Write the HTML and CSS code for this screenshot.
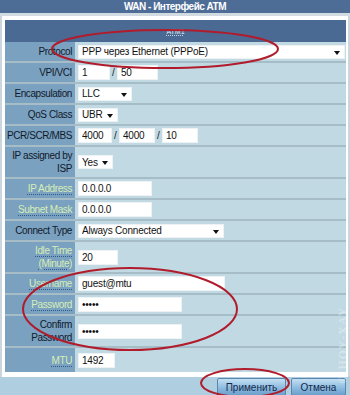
FILE: index.html
```html
<!DOCTYPE html>
<html lang="ru">
<head>
<meta charset="utf-8">
<title>WAN - Интерфейс ATM</title>
<link rel="stylesheet" href="styles.css">
</head>
<body>
<div class="title">WAN - Интерфейс ATM</div>
<div class="panel">
  <div class="sub"><span>ATM1</span></div>
  <div class="form">
    <div class="row"><div class="lab">Protocol</div><div class="val"><span class="sel w-proto"><select><option>PPP через Ethernet (PPPoE)</option></select></span></div></div>
    <div class="row"><div class="lab">VPI/VCI</div><div class="val"><input class="in w-vpi" value="1"><span class="sl">/</span><input class="in w-vci" value="50"></div></div>
    <div class="row"><div class="lab">Encapsulation</div><div class="val"><span class="sel w-llc"><select><option>LLC</option></select></span></div></div>
    <div class="row"><div class="lab">QoS Class</div><div class="val"><span class="sel w-ubr"><select><option>UBR</option></select></span></div></div>
    <div class="row"><div class="lab">PCR/SCR/MBS</div><div class="val"><input class="in w-pcr" value="4000"><span class="sl">/</span><input class="in w-scr" value="4000"><span class="sl">/</span><input class="in w-mbs" value="10"></div></div>
    <div class="row tall"><div class="lab"><div>IP assigned by<br>ISP</div></div><div class="val"><span class="sel w-yes"><select><option>Yes</option></select></span></div></div>
    <div class="row"><div class="lab"><span class="hl">IP Address</span></div><div class="val"><input class="in w-ip" value="0.0.0.0"></div></div>
    <div class="row"><div class="lab"><span class="hl">Subnet Mask</span></div><div class="val"><input class="in w-ip" value="0.0.0.0"></div></div>
    <div class="row"><div class="lab">Connect Type</div><div class="val"><span class="sel w-conn"><select><option>Always Connected</option></select></span></div></div>
    <div class="row tall"><div class="lab"><div><span class="hl">Idle Time</span><br><span class="hl">(Minute)</span></div></div><div class="val"><input class="in w-idle" value="20"></div></div>
    <div class="row"><div class="lab"><span class="hl">Username</span></div><div class="val"><input class="in w-user" value="guest@mtu"></div></div>
    <div class="row"><div class="lab"><span class="hl">Password</span></div><div class="val"><input type="password" class="in w-pass" value="12345"></div></div>
    <div class="row tall"><div class="lab"><div>Confirm<br>Password</div></div><div class="val"><input type="password" class="in w-pass" value="12345"></div></div>
    <div class="row last"><div class="lab"><span class="hl">MTU</span></div><div class="val"><input class="in w-mtu" value="1492"></div></div>
  </div>
</div>
<div class="bar">
  <button class="btn w-apply">Применить</button>
  <button class="btn w-cancel">Отмена</button>
</div>
<div class="wm">© НОУ-ХАУ</div>
<svg class="marks" width="350" height="395" viewBox="0 0 350 395" xmlns="http://www.w3.org/2000/svg">
  <ellipse cx="165" cy="49" rx="113" ry="19" fill="none" stroke="#b01c2c" stroke-width="2"/>
  <ellipse cx="130" cy="309" rx="107" ry="41" fill="none" stroke="#b01c2c" stroke-width="2"/>
  <ellipse cx="245" cy="383" rx="44" ry="14" fill="none" stroke="#b01c2c" stroke-width="2"/>
</svg>
</body>
</html>
```
FILE: styles.css
```css
html, body {
  margin: 0;
  padding: 0;
  overflow: hidden;
}
body {
  width: 350px;
  height: 395px;
  background: #cbd5dd;
  font-family: "Liberation Sans", Arial, sans-serif;
  font-size: 10px;
  position: relative;
}
.title {
  height: 13px;
  line-height: 14px;
  background: #4e6d96;
  color: #fff;
  font-weight: bold;
  font-size: 10px;
  letter-spacing: -0.5px;
  text-align: center;
  border-bottom: 3px solid #d3dbe2;
}
.panel {
  margin: 0 2px;
  background: #fff;
  padding: 4px 2px 5px 3px;
}
.sub {
  height: 22px;
  background: #4b6a93;
  display: flex;
  align-items: center;
  justify-content: center;
  color: #e8eef6;
  font-size: 7px;
}
.sub span {
  text-decoration: underline dotted #c9d6e6;
}
.form {
  display: flex;
  flex-direction: column;
}
.row {
  display: grid;
  grid-template-columns: 70px 1fr;
  height: 21px;
  box-sizing: border-box;
  border-bottom: 2px solid #a6bdc8;
}
.row.tall {
  height: 32px;
}
.row.last {
  height: 24px;
  border-bottom: none;
}
.lab {
  background: #7aa1bf;
  color: #111a2c;
  text-align: right;
  padding-right: 3px;
  display: flex;
  flex-direction: column;
  justify-content: center;
  align-items: flex-end;
  line-height: 13px;
  letter-spacing: -0.4px;
  white-space: nowrap;
}
.hl {
  color: #d6eeb6;
  text-decoration: underline dotted #2f5b8c;
  text-underline-offset: 2px;
}
.val {
  background: #c1d9e2;
  display: flex;
  align-items: center;
  padding-left: 3px;
}
.in, select {
  font-family: "Liberation Sans", Arial, sans-serif;
  font-size: 10px;
  letter-spacing: -0.2px;
  color: #111;
  background: #fff;
  border: 1px solid #eef2f4;
  box-sizing: border-box;
  height: 15px;
  padding: 0 0 0 3px;
  margin: 0;
  outline: none;
}
.sl {
  width: 7px;
  text-align: center;
  color: #222;
  font-size: 10px;
}
.sel {
  position: relative;
  display: inline-block;
}
.sel select {
  appearance: none;
  -webkit-appearance: none;
  width: 100%;
  height: 14px;
  padding-left: 3px;
  display: block;
}
.sel::after {
  content: "";
  position: absolute;
  right: 5px;
  top: 6px;
  width: 0;
  height: 0;
  border-left: 3px solid transparent;
  border-right: 3px solid transparent;
  border-top: 4px solid #111;
}
.w-proto { width: 267px; }
.w-llc { width: 54px; }
.w-ubr { width: 40px; }
.w-yes { width: 35px; }
.w-conn { width: 146px; }
.w-vpi { width: 32px; }
.w-vci { width: 41px; }
.w-pcr { width: 34px; }
.w-scr { width: 36px; }
.w-mbs { width: 36px; }
.w-ip { width: 74px; }
.w-idle { width: 40px; }
.w-user { width: 147px; }
.w-pass { width: 104px; }
.w-mtu { width: 37px; }
.bar {
  height: 18px;
  background: #afcfe1;
  display: flex;
  justify-content: flex-end;
  align-items: flex-start;
  gap: 5px;
  padding: 1px 4px 0 0;
  box-sizing: border-box;
}
.btn {
  height: 18px;
  margin: 0;
  padding: 0;
  font-family: "Liberation Sans", Arial, sans-serif;
  font-size: 10px;
  color: #13294b;
  background: linear-gradient(#c3e0f2, #8dbbe0 55%, #6b9fcb);
  border: 1px solid #5a86ad;
  border-radius: 2px;
}
.w-apply { width: 69px; }
.w-cancel { width: 55px; }
.wm {
  position: absolute;
  left: 343px;
  top: 345px;
  transform: translate(-50%, -50%) rotate(-90deg);
  white-space: nowrap;
  font-family: "Liberation Serif", serif;
  font-weight: bold;
  font-size: 12px;
  letter-spacing: 1px;
  color: rgba(255, 255, 255, 0.35);
  pointer-events: none;
}
.marks {
  position: absolute;
  left: 0;
  top: 0;
  pointer-events: none;
}
```
